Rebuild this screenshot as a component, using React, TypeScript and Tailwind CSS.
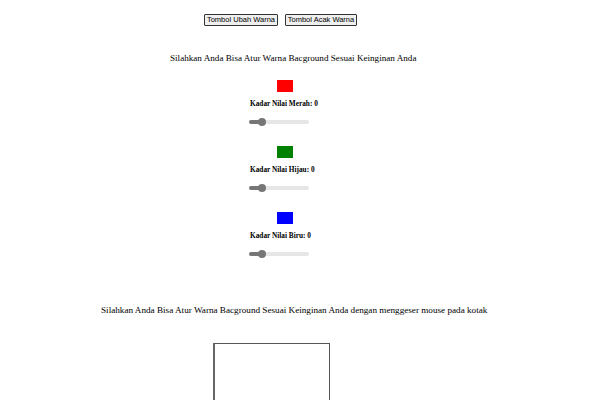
import React from 'react';

const channels = [
  { name: 'Merah', color: 'bg-[#ff0000]' },
  { name: 'Hijau', color: 'bg-[#008000]' },
  { name: 'Biru', color: 'bg-[#0000ff]' },
];

function Slider() {
  return (
    <div className="relative w-[60px] h-[8px] flex items-center">
      <div className="w-full h-[4px] rounded-full bg-[#e6e6e6]" />
      <div className="absolute left-0 w-[13px] h-[4px] rounded-l-full bg-[#767676]" />
      <div className="absolute left-[9px] w-[8px] h-[8px] rounded-full bg-[#767676]" />
    </div>
  );
}

export default function App() {
  return (
    <main className="w-[600px] h-[400px] overflow-hidden bg-white font-['Liberation_Serif',serif] text-black">
      <div className="flex gap-[7px] pl-[204px] pt-[14px]">
        <button className="h-[12px] w-[74px] px-0 whitespace-nowrap border border-[#333] bg-[#efefef] text-[7.5px] leading-none font-['Liberation_Sans',sans-serif] rounded-[1px]">
          Tombol Ubah Warna
        </button>
        <button className="h-[12px] w-[72px] px-0 whitespace-nowrap border border-[#333] bg-[#efefef] text-[7.5px] leading-none font-['Liberation_Sans',sans-serif] rounded-[1px]">
          Tombol Acak Warna
        </button>
      </div>

      <p className="pl-[170px] mt-[26px] text-[9.15px] leading-[12px] whitespace-nowrap">
        Silahkan Anda Bisa Atur Warna Bacground Sesuai Keinginan Anda
      </p>

      <div className="flex flex-col gap-[20px] mt-[16px]">
        {channels.map((c) => (
          <div key={c.name} className="flex flex-col pl-[249px]">
            <div className={`ml-[28px] w-[16px] h-[12px] ${c.color}`} />
            <p className="mt-[7px] ml-[1px] text-[7.3px] leading-[10px] font-bold whitespace-nowrap">Kadar Nilai {c.name}: 0</p>
            <div className="mt-[9px]">
              <Slider />
            </div>
          </div>
        ))}
      </div>

      <p className="pl-[101px] mt-[46px] text-[9.17px] leading-[12px] whitespace-nowrap">
        Silahkan Anda Bisa Atur Warna Bacground Sesuai Keinginan Anda dengan menggeser mouse pada kotak
      </p>

      <div className="ml-[213px] mt-[27px] w-[117px] h-[80px] border border-[#555] border-l-2 border-l-[#666]" />
    </main>
  );
}
